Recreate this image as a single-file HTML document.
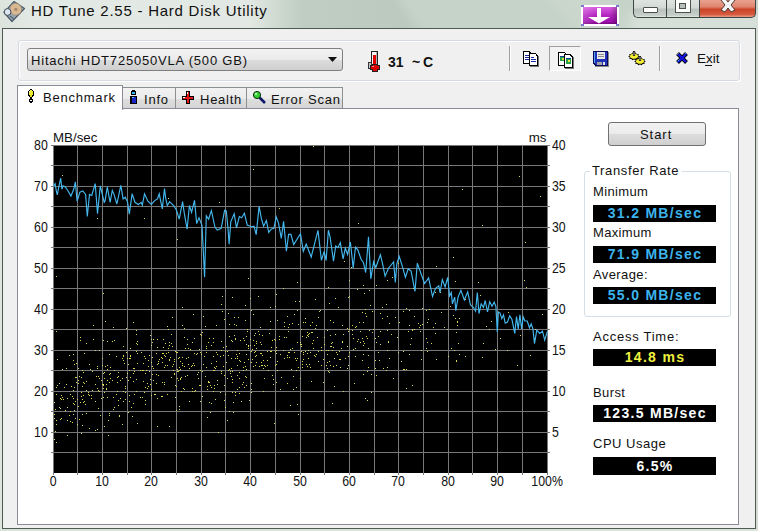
<!DOCTYPE html>
<html><head><meta charset="utf-8">
<style>
*{margin:0;padding:0;box-sizing:border-box}
html,body{width:758px;height:531px;overflow:hidden}
body{position:relative;font-family:"Liberation Sans",sans-serif;background:#c6d2c8;color:#000}
.a{position:absolute}
.t{position:absolute;white-space:nowrap;line-height:1}
#glass{left:0;top:0;width:758px;height:531px}
#client{left:2px;top:28px;width:754px;height:501px;background:#f0f0f0;border:1px solid #4f5a55}
.cap{top:0;height:18px;border:1px solid #3c4642;border-top:none}
.tabi{background:linear-gradient(#f2f2f2,#ebebeb 50%,#dedede 51%,#d4d4d4);border:1px solid #8e8f8f;border-bottom:none}
.lcd{position:absolute;background:#000;left:593px;width:123px;height:17px;font-weight:bold;font-size:14px;line-height:17px;text-align:center;letter-spacing:1.3px;text-indent:1px}
.ui{font-size:13px;color:#111}
</style></head><body>
<svg class="a" id="glass" width="758" height="531" viewBox="0 0 758 531">
 <defs>
  <linearGradient id="gl" x1="0" x2="1" y1="0" y2="0">
   <stop offset="0" stop-color="#dde4de"/>
   <stop offset="0.05" stop-color="#e3e9e4"/>
   <stop offset="0.33" stop-color="#e2e8e3"/>
   <stop offset="0.365" stop-color="#cfdad1"/>
   <stop offset="0.40" stop-color="#bfcdc2"/>
   <stop offset="0.52" stop-color="#bccabf"/>
   <stop offset="1" stop-color="#bfccc2"/>
  </linearGradient>
  <filter id="bl" x="-0.1" y="-0.1" width="1.2" height="1.2"><feGaussianBlur stdDeviation="4"/></filter>
 </defs>
 <rect width="758" height="531" fill="#d2dcd4"/>
 <rect width="758" height="30" fill="url(#gl)"/>
 <g filter="url(#bl)">
  <polygon points="392,-10 760,-10 760,40 426,40" fill="#c6d3c9"/>
  <polygon points="540,-10 600,-10 640,40 590,40" fill="#cdd9cf" opacity="0.7"/>
  <rect x="630" y="12" width="140" height="30" fill="#d6dfd8"/>
 </g>
 <rect x="0" y="28" width="2" height="503" fill="#dfe6e0"/>
 <rect x="756" y="28" width="2" height="503" fill="#d3ddd5"/>
 <rect x="0" y="529" width="758" height="2" fill="#dae2dc"/>
</svg>
<!-- app icon -->
<svg class="a" style="left:0;top:0" width="28" height="24" viewBox="0 0 28 24">
 <path d="M14 1.5 L24.5 8.5 L12 21.5 L4 12.5 Z" fill="#9aa8b4" stroke="#4c5a68" stroke-width="1.2" stroke-linejoin="round"/>
 <circle cx="15.6" cy="9.2" r="6" fill="#d9b894" stroke="#8a7a6a" stroke-width="0.6"/>
 <circle cx="15.8" cy="9.4" r="1.6" fill="#a88868"/>
 <circle cx="7.6" cy="12" r="3.4" fill="#dde6ee" stroke="#3e4a56" stroke-width="1"/>
 <path d="M10 16 L14 19" stroke="#5a6a7a" stroke-width="1.5"/>
</svg>
<div class="t" style="left:31px;top:3px;font-size:15px;color:#101010;letter-spacing:0.75px">HD Tune 2.55 - Hard Disk Utility</div>
<!-- purple button -->
<div class="a" style="left:581px;top:5px;width:38px;height:21px;background:#fff"></div>
<div class="a" style="left:581px;top:5px;width:3px;height:2px;background:#7c78d0"></div>
<div class="a" style="left:616px;top:5px;width:3px;height:2px;background:#7c78d0"></div>
<div class="a" style="left:581px;top:24px;width:3px;height:2px;background:#7c78d0"></div>
<div class="a" style="left:616px;top:24px;width:3px;height:2px;background:#7c78d0"></div>
<div class="a" style="left:583px;top:7px;width:34px;height:17px;background:linear-gradient(90deg,rgba(255,255,255,.18),rgba(255,255,255,0) 40%,rgba(0,0,0,0) 80%,rgba(0,0,0,.25)),linear-gradient(#d860e0,#b424c0 50%,#a010b0 85%,#7a0880);"></div>
<svg class="a" style="left:583px;top:7px" width="34" height="17" viewBox="0 0 34 17"><path d="M14 1 H18 V10 L27 10 L16 16.5 L5 10 L14 10 Z" fill="#fff"/></svg>
<!-- caption buttons -->
<div class="a cap" style="left:633px;width:34px;border-right:none;border-bottom-left-radius:5px;background:linear-gradient(#dfe4e1,#d3d9d5 45%,#b9c2bd 55%,#c7cfca 90%,#e4e9e6)"></div>
<div class="a cap" style="left:666px;width:33px;border-right:none;background:linear-gradient(#dfe4e1,#d3d9d5 45%,#b9c2bd 55%,#c7cfca 90%,#e4e9e6)"></div>
<div class="a cap" style="left:699px;width:57px;border-bottom-right-radius:5px;background:linear-gradient(#eaa190,#e08570 40%,#cc4426 55%,#d65a3e 85%,#eb9b88)"></div>
<div class="a" style="left:643px;top:7px;width:15px;height:6px;background:#fff;border:1px solid #4a524e;border-radius:1px"></div>
<div class="a" style="left:675px;top:-1px;width:16px;height:14px;background:#fff;border:1px solid #4a524e"></div>
<div class="a" style="left:679px;top:3px;width:7px;height:6px;background:#b8beba;border:1px solid #4a524e"></div>
<svg class="a" style="left:718px;top:-3px" width="20" height="17" viewBox="0 0 20 17"><path d="M3 3 L7 1 L10 5 L13 1 L17 3 L13 8 L17 13 L13 15 L10 11 L7 15 L3 13 L7 8 Z" fill="#f4f4f4" stroke="#4a3a36" stroke-width="1"/></svg>

<div class="a" id="client"></div>
<!-- toolbar panel -->
<div class="a" style="left:18px;top:40px;width:722px;height:41px;border:1px solid #d6dae2;border-radius:3px;box-shadow:inset 1px 1px 0 #fff,1px 1px 0 #fff"></div>
<!-- combo -->
<div class="a" style="left:27px;top:48px;width:316px;height:23px;border:1px solid #7f7f7f;border-radius:3px;background:linear-gradient(#f3f3f3,#ebebeb 50%,#dddddd 51%,#cfcfcf)"></div>
<div class="t ui" style="left:31px;top:54px;letter-spacing:0.8px">Hitachi HDT725050VLA (500 GB)</div>
<svg class="a" style="left:328px;top:57px" width="9" height="6" viewBox="0 0 9 6"><path d="M0 0 H9 L4.5 5 Z" fill="#111"/></svg>
<!-- thermometer -->
<svg class="a" style="left:366px;top:49px" width="16" height="24" viewBox="0 0 16 24" shape-rendering="crispEdges">
 <rect x="5" y="2" width="7" height="15" fill="#222"/>
 <rect x="6" y="3" width="5" height="13" fill="#f4f4f4"/>
 <rect x="10" y="3" width="1" height="13" fill="#b0b0b0"/>
 <rect x="7" y="6" width="3" height="11" fill="#e00000"/>
 <rect x="2" y="13" width="4" height="7" fill="#333"/>
 <rect x="3" y="14" width="2" height="5" fill="#c8c8c8"/>
 <rect x="4" y="16" width="10" height="5" fill="#222"/>
 <rect x="6" y="15" width="6" height="8" fill="#222"/>
 <rect x="5" y="17" width="8" height="3" fill="#e00000"/>
 <rect x="7" y="16" width="4" height="6" fill="#e00000"/>
 <rect x="6" y="17" width="2" height="1" fill="#ff9090"/>
</svg>
<div class="t" style="left:388px;top:55px;font-size:14px;font-weight:bold;color:#111">31</div>
<div class="t" style="left:412px;top:55px;font-size:14px;font-weight:bold;color:#111">~</div><div class="t" style="left:423px;top:55px;font-size:14px;font-weight:bold;color:#111">C</div>
<!-- separators -->
<div class="a" style="left:509px;top:46px;width:2px;height:25px;border-left:1px solid #a0a0a0;border-right:1px solid #fff"></div>
<div class="a" style="left:659px;top:46px;width:2px;height:25px;border-left:1px solid #a0a0a0;border-right:1px solid #fff"></div>
<!-- pressed button -->
<div class="a" style="left:549px;top:46px;width:32px;height:25px;border:1px solid;border-color:#a0a0a0 #fff #fff #a0a0a0;background:#f3f3f3"></div>
<!-- icons -->
<svg class="a" style="left:520px;top:48px" width="22" height="20" viewBox="0 0 22 20" shape-rendering="crispEdges">
 <path d="M3 3h7v1h1v9h-8z" fill="#000"/>
 <rect x="4" y="4" width="5" height="11" fill="#fff"/>
 <rect x="5" y="7" width="4" height="1" fill="#1c2aa8"/><rect x="5" y="9" width="4" height="1" fill="#1c2aa8"/><rect x="5" y="11" width="4" height="1" fill="#1c2aa8"/>
 <rect x="3" y="3" width="7" height="1" fill="#000"/><rect x="3" y="3" width="1" height="13" fill="#000"/><rect x="3" y="15" width="7" height="1" fill="#000"/>
 <path d="M9 5h6l3 3v10h-9z" fill="#000"/>
 <path d="M10 6h5v1h1v1h1v9h-7z" fill="#fff"/>
 <rect x="15" y="6" width="1" height="2" fill="#fff"/>
 <rect x="11" y="9" width="3" height="1" fill="#1c2aa8"/><rect x="11" y="11" width="5" height="1" fill="#1c2aa8"/><rect x="11" y="13" width="5" height="1" fill="#1c2aa8"/>
 <rect x="18" y="8" width="1" height="11" fill="#777"/><rect x="10" y="18" width="9" height="1" fill="#777"/>
</svg>
<svg class="a" style="left:556px;top:50px" width="22" height="20" viewBox="0 0 22 20" shape-rendering="crispEdges">
 <path d="M2 2h7v1h1v13h-8z" fill="#000"/>
 <rect x="3" y="3" width="6" height="12" fill="#fff"/>
 <rect x="4" y="6" width="4" height="1" fill="#1a3a9a"/>
 <rect x="4" y="7" width="4" height="4" fill="#28a048"/>
 <rect x="6" y="8" width="2" height="2" fill="#d8e040"/>
 <path d="M8 4h6l3 3v11h-9z" fill="#000"/>
 <path d="M9 5h5v1h1v1h1v10h-7z" fill="#fff"/>
 <rect x="10" y="8" width="5" height="1" fill="#1a3a9a"/>
 <rect x="10" y="9" width="5" height="5" fill="#28a048"/>
 <rect x="12" y="10" width="2" height="2" fill="#e0e840"/>
 <rect x="17" y="7" width="1" height="12" fill="#777"/><rect x="9" y="18" width="9" height="1" fill="#777"/>
</svg>
<svg class="a" style="left:592px;top:50px" width="18" height="18" viewBox="0 0 18 18" shape-rendering="crispEdges">
 <path d="M1 1h15v15h-13l-2-2z" fill="#0a0a58"/>
 <path d="M2 2h13v13h-11l-2-2z" fill="#2232b8"/>
 <rect x="2" y="2" width="1" height="11" fill="#50a8f0"/>
 <rect x="5" y="2" width="8" height="7" fill="#e8e8e8"/>
 <rect x="6" y="4" width="6" height="1" fill="#8c8c8c"/><rect x="6" y="6" width="6" height="1" fill="#8c8c8c"/>
 <rect x="5" y="12" width="5" height="3" fill="#a4a4a4"/><rect x="11" y="12" width="2" height="3" fill="#e0e0e0"/>
 <rect x="16" y="2" width="1" height="15" fill="#888"/><rect x="3" y="16" width="14" height="1" fill="#888"/>
</svg>
<svg class="a" style="left:627px;top:49px" width="20" height="18" viewBox="0 0 20 18">
 <polygon points="18.90,12.40 17.21,13.35 17.77,14.81 15.60,14.89 14.82,16.30 13.00,15.47 11.18,16.30 10.40,14.89 8.23,14.81 8.79,13.35 7.10,12.40 8.79,11.45 8.23,9.99 10.40,9.91 11.18,8.50 13.00,9.33 14.82,8.50 15.60,9.91 17.77,9.99 17.21,11.45" fill="#000"/>
 <polygon points="17.40,12.20 16.68,12.96 16.56,13.85 15.28,14.19 14.36,14.86 13.00,14.66 11.64,14.86 10.72,14.19 9.44,13.85 9.32,12.96 8.60,12.20 9.32,11.44 9.44,10.55 10.72,10.21 11.64,9.54 13.00,9.74 14.36,9.54 15.28,10.21 16.56,10.55 16.68,11.44" fill="#f4f030"/>
 <polygon points="12.90,7.40 11.21,8.35 11.77,9.81 9.60,9.89 8.82,11.30 7.00,10.47 5.18,11.30 4.40,9.89 2.23,9.81 2.79,8.35 1.10,7.40 2.79,6.45 2.23,4.99 4.40,4.91 5.18,3.50 7.00,4.33 8.82,3.50 9.60,4.91 11.77,4.99 11.21,6.45" fill="#000"/>
 <polygon points="11.40,7.20 10.68,7.96 10.56,8.85 9.28,9.19 8.36,9.86 7.00,9.66 5.64,9.86 4.72,9.19 3.44,8.85 3.32,7.96 2.60,7.20 3.32,6.44 3.44,5.55 4.72,5.21 5.64,4.54 7.00,4.74 8.36,4.54 9.28,5.21 10.56,5.55 10.68,6.44" fill="#f4f030"/>
 <path d="M7 2v5M13 7v5" stroke="#000" stroke-width="2.2"/>
 <path d="M7 2.6v4M13 7.6v4" stroke="#d8d8d8" stroke-width="0.9"/>
</svg>
<svg class="a" style="left:674px;top:50px" width="16" height="16" viewBox="0 0 16 16">
 <path d="M3.5 3.5 L12.5 12.5 M12.5 3.5 L3.5 12.5" stroke="#000" stroke-width="4"/>
 <path d="M4 4 L12 12 M12 4 L4 12" stroke="#1414e0" stroke-width="2.4"/>
 <path d="M3.2 4.6 L4.6 3.2 M3.4 11.4 L5.4 9.4 M10.6 3.8 L11.8 3.2" stroke="#70d0ff" stroke-width="0.8"/>
</svg>
<div class="t ui" style="left:697px;top:52px;font-size:13.5px">Exit</div>
<div class="a" style="left:705px;top:65px;width:7px;height:1px;background:#111"></div>

<!-- tabs -->
<div class="a tabi" style="left:122px;top:87px;width:54px;height:22px"></div>
<div class="a tabi" style="left:175px;top:87px;width:72px;height:22px"></div>
<div class="a tabi" style="left:246px;top:87px;width:97px;height:22px"></div>
<!-- tab panel -->
<div class="a" style="left:17px;top:108px;width:722px;height:417px;background:#fff;border:1px solid #898c95"></div>
<div class="a" style="left:17px;top:85px;width:106px;height:25px;background:#fff;border:1px solid #898c95;border-bottom:none"></div>
<!-- tab icons/text -->
<svg class="a" style="left:24px;top:86px" width="16" height="18" viewBox="0 0 16 18" shape-rendering="crispEdges">
 <rect x="6" y="3" width="2" height="1" fill="#000"/>
 <rect x="5" y="4" width="4" height="1" fill="#000"/>
 <rect x="4" y="5" width="6" height="5" fill="#000"/>
 <rect x="5" y="10" width="4" height="1" fill="#000"/>
 <rect x="6" y="11" width="2" height="2" fill="#000"/>
 <rect x="5" y="13" width="4" height="3" fill="#000"/>
 <rect x="6" y="16" width="2" height="1" fill="#000"/>
 <rect x="6" y="4" width="2" height="1" fill="#f0f040"/>
 <rect x="5" y="5" width="4" height="4" fill="#eaea30"/>
 <rect x="6" y="9" width="2" height="2" fill="#d8d820"/>
 <rect x="5" y="5" width="1" height="2" fill="#fafab0"/>
 <rect x="6" y="14" width="2" height="1" fill="#fff"/>
</svg>
<div class="t ui" style="left:43px;top:91px;letter-spacing:0.78px">Benchmark</div>
<svg class="a" style="left:126px;top:88px" width="16" height="18" viewBox="0 0 16 18" shape-rendering="crispEdges">
 <rect x="5" y="3" width="5" height="4" fill="#000"/>
 <rect x="6" y="2" width="3" height="1" fill="#000"/>
 <rect x="6" y="4" width="3" height="2" fill="#30b8f0"/>
 <rect x="4" y="8" width="7" height="8" fill="#000"/>
 <rect x="6" y="9" width="4" height="6" fill="#1a22c8"/>
 <rect x="6" y="9" width="2" height="1" fill="#50c0ff"/>
</svg>
<div class="t ui" style="left:144px;top:93px;letter-spacing:0.8px">Info</div>
<svg class="a" style="left:176px;top:86px" width="24" height="22" viewBox="0 0 24 22" shape-rendering="crispEdges">
 <rect x="10" y="5" width="4" height="13" fill="#000"/>
 <rect x="6" y="10" width="12" height="4" fill="#000"/>
 <rect x="11" y="6" width="2" height="11" fill="#e01818"/>
 <rect x="7" y="11" width="10" height="2" fill="#e01818"/>
 <rect x="11" y="6" width="1" height="2" fill="#fff"/>
 <rect x="7" y="11" width="2" height="1" fill="#fff"/>
</svg>
<div class="t ui" style="left:200px;top:93px;letter-spacing:0.75px">Health</div>
<svg class="a" style="left:252px;top:90px" width="15" height="15" viewBox="0 0 15 15">
 <path d="M7 7 L13 13" stroke="#10186a" stroke-width="2.6"/>
 <circle cx="5" cy="5" r="3.6" fill="#30d030" stroke="#103010"/>
 <circle cx="4" cy="4" r="1.2" fill="#b0ffb0"/>
</svg>
<div class="t ui" style="left:271px;top:93px;letter-spacing:0.75px">Error Scan</div>

<svg class="a" style="left:0;top:0" width="758" height="531" viewBox="0 0 758 531"><rect x="53" y="145" width="495" height="328" fill="#000"/><path d="M53.5 145 V474.5 M77.5 145 V474.5 M102.5 145 V474.5 M127.5 145 V474.5 M151.5 145 V474.5 M176.5 145 V474.5 M201.5 145 V474.5 M225.5 145 V474.5 M250.5 145 V474.5 M275.5 145 V474.5 M300.5 145 V474.5 M324.5 145 V474.5 M349.5 145 V474.5 M374.5 145 V474.5 M398.5 145 V474.5 M423.5 145 V474.5 M448.5 145 V474.5 M472.5 145 V474.5 M497.5 145 V474.5 M522.5 145 V474.5 M547.5 145 V474.5 M50.5 145.5 H549.5 M50.5 165.5 H549.5 M50.5 186.5 H549.5 M50.5 206.5 H549.5 M50.5 227.5 H549.5 M50.5 247.5 H549.5 M50.5 268.5 H549.5 M50.5 288.5 H549.5 M50.5 309.5 H549.5 M50.5 329.5 H549.5 M50.5 350.5 H549.5 M50.5 370.5 H549.5 M50.5 391.5 H549.5 M50.5 411.5 H549.5 M50.5 432.5 H549.5 M50.5 452.5 H549.5" stroke="#787878" stroke-width="1" fill="none" shape-rendering="crispEdges"/><path d="M213 356h1v1h-1zM317 337h1v1h-1zM82 414h1v1h-1zM88 394h1v1h-1zM262 365h1v1h-1zM337 354h1v1h-1zM534 338h1v1h-1zM124 363h1v1h-1zM205 376h1v1h-1zM368 367h1v1h-1zM323 359h1v1h-1zM388 342h1v1h-1zM208 342h1v1h-1zM174 373h1v1h-1zM312 343h1v1h-1zM259 334h1v1h-1zM128 412h1v1h-1zM339 351h1v1h-1zM287 383h1v1h-1zM458 343h1v1h-1zM243 382h1v1h-1zM136 379h1v1h-1zM83 402h1v1h-1zM246 369h1v1h-1zM93 339h1v1h-1zM190 349h1v1h-1zM230 371h1v1h-1zM140 370h1v1h-1zM168 352h1v1h-1zM56 387h1v1h-1zM235 392h1v1h-1zM307 335h1v1h-1zM386 370h1v1h-1zM247 331h1v1h-1zM104 392h1v1h-1zM156 374h1v1h-1zM221 373h1v1h-1zM103 384h1v1h-1zM66 384h1v1h-1zM178 358h1v1h-1zM233 402h1v1h-1zM283 288h1v1h-1zM96 376h1v1h-1zM65 410h1v1h-1zM313 340h1v1h-1zM182 365h1v1h-1zM136 334h1v1h-1zM216 352h1v1h-1zM165 365h1v1h-1zM67 398h1v1h-1zM181 391h1v1h-1zM162 362h1v1h-1zM150 335h1v1h-1zM95 350h1v1h-1zM141 352h1v1h-1zM251 392h1v1h-1zM410 344h1v1h-1zM125 388h1v1h-1zM226 362h1v1h-1zM313 348h1v1h-1zM267 360h1v1h-1zM177 352h1v1h-1zM172 366h1v1h-1zM118 405h1v1h-1zM228 313h1v1h-1zM260 327h1v1h-1zM300 342h1v1h-1zM270 351h1v1h-1zM55 409h1v1h-1zM214 385h1v1h-1zM327 368h1v1h-1zM176 386h1v1h-1zM330 365h1v1h-1zM355 327h1v1h-1zM305 318h1v1h-1zM289 357h1v1h-1zM113 397h1v1h-1zM89 395h1v1h-1zM129 370h1v1h-1zM162 358h1v1h-1zM249 400h1v1h-1zM133 373h1v1h-1zM307 353h1v1h-1zM409 354h1v1h-1zM326 365h1v1h-1zM360 342h1v1h-1zM85 404h1v1h-1zM105 321h1v1h-1zM73 390h1v1h-1zM261 365h1v1h-1zM456 361h1v1h-1zM334 386h1v1h-1zM98 376h1v1h-1zM89 364h1v1h-1zM95 430h1v1h-1zM277 370h1v1h-1zM185 348h1v1h-1zM107 380h1v1h-1zM78 383h1v1h-1zM427 351h1v1h-1zM300 344h1v1h-1zM177 371h1v1h-1zM147 383h1v1h-1zM297 342h1v1h-1zM247 329h1v1h-1zM222 296h1v1h-1zM253 366h1v1h-1zM88 392h1v1h-1zM179 406h1v1h-1zM192 388h1v1h-1zM198 378h1v1h-1zM183 388h1v1h-1zM174 359h1v1h-1zM54 418h1v1h-1zM287 357h1v1h-1zM56 424h1v1h-1zM98 390h1v1h-1zM203 364h1v1h-1zM342 342h1v1h-1zM245 320h1v1h-1zM75 418h1v1h-1zM122 358h1v1h-1zM302 361h1v1h-1zM167 326h1v1h-1zM119 416h1v1h-1zM328 371h1v1h-1zM362 338h1v1h-1zM301 346h1v1h-1zM378 336h1v1h-1zM90 369h1v1h-1zM412 330h1v1h-1zM297 282h1v1h-1zM289 352h1v1h-1zM370 305h1v1h-1zM126 377h1v1h-1zM333 322h1v1h-1zM83 372h1v1h-1zM386 304h1v1h-1zM308 334h1v1h-1zM62 397h1v1h-1zM275 365h1v1h-1zM157 426h1v1h-1zM123 391h1v1h-1zM167 365h1v1h-1zM293 376h1v1h-1zM275 351h1v1h-1zM123 360h1v1h-1zM54 439h1v1h-1zM237 389h1v1h-1zM231 358h1v1h-1zM189 401h1v1h-1zM194 391h1v1h-1zM176 352h1v1h-1zM237 356h1v1h-1zM408 331h1v1h-1zM194 338h1v1h-1zM286 337h1v1h-1zM376 375h1v1h-1zM328 350h1v1h-1zM156 383h1v1h-1zM298 414h1v1h-1zM275 306h1v1h-1zM148 366h1v1h-1zM171 377h1v1h-1zM422 308h1v1h-1zM239 372h1v1h-1zM84 401h1v1h-1zM301 344h1v1h-1zM187 344h1v1h-1zM483 343h1v1h-1zM69 415h1v1h-1zM342 325h1v1h-1zM246 377h1v1h-1zM107 341h1v1h-1zM311 381h1v1h-1zM279 336h1v1h-1zM73 398h1v1h-1zM371 392h1v1h-1zM116 356h1v1h-1zM109 354h1v1h-1zM312 332h1v1h-1zM349 352h1v1h-1zM202 396h1v1h-1zM169 359h1v1h-1zM205 326h1v1h-1zM260 353h1v1h-1zM165 356h1v1h-1zM389 358h1v1h-1zM302 367h1v1h-1zM457 325h1v1h-1zM162 353h1v1h-1zM297 404h1v1h-1zM163 339h1v1h-1zM126 328h1v1h-1zM158 375h1v1h-1zM83 395h1v1h-1zM145 373h1v1h-1zM380 331h1v1h-1zM237 358h1v1h-1zM191 366h1v1h-1zM229 369h1v1h-1zM78 368h1v1h-1zM237 365h1v1h-1zM495 349h1v1h-1zM256 355h1v1h-1zM71 386h1v1h-1zM220 392h1v1h-1zM182 357h1v1h-1zM209 402h1v1h-1zM518 327h1v1h-1zM169 426h1v1h-1zM244 340h1v1h-1zM265 366h1v1h-1zM352 334h1v1h-1zM211 363h1v1h-1zM151 362h1v1h-1zM175 397h1v1h-1zM214 367h1v1h-1zM184 389h1v1h-1zM403 351h1v1h-1zM169 342h1v1h-1zM380 313h1v1h-1zM332 342h1v1h-1zM175 351h1v1h-1zM129 358h1v1h-1zM248 345h1v1h-1zM303 359h1v1h-1zM287 316h1v1h-1zM73 403h1v1h-1zM181 377h1v1h-1zM347 346h1v1h-1zM123 401h1v1h-1zM179 357h1v1h-1zM59 383h1v1h-1zM387 330h1v1h-1zM85 404h1v1h-1zM248 348h1v1h-1zM134 368h1v1h-1zM255 333h1v1h-1zM207 417h1v1h-1zM229 411h1v1h-1zM232 297h1v1h-1zM412 385h1v1h-1zM262 355h1v1h-1zM253 340h1v1h-1zM61 399h1v1h-1zM97 366h1v1h-1zM125 399h1v1h-1zM310 367h1v1h-1zM151 389h1v1h-1zM291 369h1v1h-1zM459 318h1v1h-1zM440 292h1v1h-1zM161 396h1v1h-1zM308 358h1v1h-1zM74 404h1v1h-1zM426 338h1v1h-1zM348 331h1v1h-1zM362 312h1v1h-1zM263 368h1v1h-1zM273 384h1v1h-1zM294 352h1v1h-1zM279 339h1v1h-1zM117 382h1v1h-1zM99 378h1v1h-1zM367 338h1v1h-1zM305 322h1v1h-1zM149 371h1v1h-1zM296 360h1v1h-1zM86 381h1v1h-1zM426 348h1v1h-1zM455 318h1v1h-1zM301 351h1v1h-1zM302 364h1v1h-1zM72 422h1v1h-1zM137 423h1v1h-1zM110 367h1v1h-1zM105 366h1v1h-1zM363 345h1v1h-1zM231 340h1v1h-1zM271 351h1v1h-1zM457 322h1v1h-1zM342 341h1v1h-1zM70 394h1v1h-1zM357 289h1v1h-1zM118 376h1v1h-1zM375 360h1v1h-1zM106 384h1v1h-1zM164 355h1v1h-1zM360 331h1v1h-1zM120 380h1v1h-1zM101 398h1v1h-1zM251 389h1v1h-1zM330 346h1v1h-1zM371 374h1v1h-1zM176 352h1v1h-1zM75 377h1v1h-1zM82 399h1v1h-1zM60 408h1v1h-1zM152 366h1v1h-1zM303 352h1v1h-1zM206 348h1v1h-1zM77 399h1v1h-1zM57 359h1v1h-1zM420 331h1v1h-1zM165 343h1v1h-1zM168 348h1v1h-1zM404 369h1v1h-1zM326 350h1v1h-1zM184 337h1v1h-1zM486 326h1v1h-1zM421 350h1v1h-1zM171 343h1v1h-1zM284 322h1v1h-1zM269 333h1v1h-1zM158 361h1v1h-1zM92 390h1v1h-1zM106 388h1v1h-1zM223 366h1v1h-1zM86 390h1v1h-1zM232 379h1v1h-1zM86 343h1v1h-1zM106 388h1v1h-1zM364 343h1v1h-1zM103 385h1v1h-1zM211 345h1v1h-1zM64 387h1v1h-1zM235 395h1v1h-1zM69 355h1v1h-1zM224 375h1v1h-1zM318 351h1v1h-1zM457 321h1v1h-1zM54 402h1v1h-1zM56 331h1v1h-1zM295 358h1v1h-1zM224 385h1v1h-1zM182 363h1v1h-1zM398 352h1v1h-1zM108 420h1v1h-1zM362 360h1v1h-1zM251 362h1v1h-1zM491 321h1v1h-1zM155 394h1v1h-1zM240 340h1v1h-1zM168 329h1v1h-1zM225 351h1v1h-1zM130 356h1v1h-1zM137 341h1v1h-1zM116 394h1v1h-1zM148 360h1v1h-1zM130 377h1v1h-1zM310 367h1v1h-1zM215 399h1v1h-1zM104 378h1v1h-1zM104 426h1v1h-1zM414 329h1v1h-1zM150 384h1v1h-1zM245 366h1v1h-1zM250 345h1v1h-1zM365 313h1v1h-1zM123 346h1v1h-1zM336 365h1v1h-1zM261 344h1v1h-1zM369 290h1v1h-1zM208 382h1v1h-1zM363 354h1v1h-1zM262 335h1v1h-1zM144 356h1v1h-1zM436 266h1v1h-1zM72 396h1v1h-1zM133 403h1v1h-1zM103 373h1v1h-1zM320 310h1v1h-1zM255 351h1v1h-1zM157 339h1v1h-1zM114 407h1v1h-1zM228 355h1v1h-1zM60 419h1v1h-1zM260 342h1v1h-1zM164 384h1v1h-1zM161 357h1v1h-1zM117 391h1v1h-1zM284 358h1v1h-1zM227 420h1v1h-1zM284 337h1v1h-1zM239 353h1v1h-1zM263 391h1v1h-1zM192 365h1v1h-1zM202 332h1v1h-1zM378 352h1v1h-1zM82 425h1v1h-1zM123 355h1v1h-1zM365 398h1v1h-1zM376 342h1v1h-1zM103 388h1v1h-1zM224 400h1v1h-1zM136 343h1v1h-1zM151 345h1v1h-1zM315 299h1v1h-1zM327 362h1v1h-1zM169 360h1v1h-1zM283 350h1v1h-1zM295 301h1v1h-1zM57 385h1v1h-1zM284 326h1v1h-1zM238 317h1v1h-1zM367 371h1v1h-1zM216 366h1v1h-1zM305 351h1v1h-1zM220 356h1v1h-1zM234 317h1v1h-1zM157 364h1v1h-1zM261 362h1v1h-1zM301 329h1v1h-1zM303 322h1v1h-1zM216 325h1v1h-1zM201 335h1v1h-1zM73 360h1v1h-1zM78 406h1v1h-1zM357 341h1v1h-1zM389 323h1v1h-1zM429 309h1v1h-1zM143 381h1v1h-1zM376 285h1v1h-1zM330 335h1v1h-1zM210 385h1v1h-1zM80 402h1v1h-1zM60 398h1v1h-1zM256 343h1v1h-1zM128 364h1v1h-1zM56 442h1v1h-1zM97 429h1v1h-1zM117 377h1v1h-1zM414 316h1v1h-1zM78 380h1v1h-1zM413 288h1v1h-1zM363 285h1v1h-1zM178 380h1v1h-1zM406 369h1v1h-1zM456 332h1v1h-1zM207 386h1v1h-1zM293 389h1v1h-1zM234 324h1v1h-1zM125 392h1v1h-1zM232 341h1v1h-1zM243 338h1v1h-1zM332 403h1v1h-1zM217 384h1v1h-1zM349 296h1v1h-1zM239 378h1v1h-1zM451 348h1v1h-1zM261 353h1v1h-1zM74 410h1v1h-1zM335 298h1v1h-1zM224 319h1v1h-1zM152 357h1v1h-1zM352 325h1v1h-1zM179 370h1v1h-1zM97 388h1v1h-1zM288 331h1v1h-1zM147 388h1v1h-1zM232 392h1v1h-1zM252 359h1v1h-1zM106 389h1v1h-1zM441 312h1v1h-1zM309 333h1v1h-1zM70 411h1v1h-1zM333 322h1v1h-1zM178 371h1v1h-1zM95 401h1v1h-1zM328 287h1v1h-1zM348 356h1v1h-1zM112 380h1v1h-1zM383 368h1v1h-1zM274 423h1v1h-1zM163 353h1v1h-1zM179 409h1v1h-1zM465 299h1v1h-1zM81 392h1v1h-1zM387 280h1v1h-1zM345 358h1v1h-1zM180 379h1v1h-1zM290 349h1v1h-1zM387 350h1v1h-1zM406 388h1v1h-1zM162 382h1v1h-1zM122 424h1v1h-1zM276 382h1v1h-1zM363 341h1v1h-1zM125 386h1v1h-1zM185 376h1v1h-1zM136 391h1v1h-1zM210 412h1v1h-1zM81 433h1v1h-1zM382 318h1v1h-1zM180 369h1v1h-1zM233 412h1v1h-1zM102 384h1v1h-1zM411 338h1v1h-1zM122 378h1v1h-1zM145 387h1v1h-1zM335 334h1v1h-1zM142 370h1v1h-1zM92 371h1v1h-1zM353 338h1v1h-1zM355 356h1v1h-1zM153 368h1v1h-1zM409 310h1v1h-1zM296 370h1v1h-1zM145 358h1v1h-1zM234 335h1v1h-1zM56 420h1v1h-1zM273 379h1v1h-1zM211 387h1v1h-1zM241 401h1v1h-1zM306 364h1v1h-1zM318 361h1v1h-1zM143 370h1v1h-1zM177 378h1v1h-1zM397 337h1v1h-1zM62 369h1v1h-1zM399 322h1v1h-1zM76 363h1v1h-1zM191 366h1v1h-1zM253 314h1v1h-1zM126 352h1v1h-1zM421 359h1v1h-1zM245 305h1v1h-1zM248 359h1v1h-1zM172 346h1v1h-1zM268 370h1v1h-1zM80 340h1v1h-1zM176 352h1v1h-1zM315 328h1v1h-1zM267 365h1v1h-1zM489 329h1v1h-1zM369 330h1v1h-1zM359 322h1v1h-1zM309 364h1v1h-1zM204 356h1v1h-1zM113 409h1v1h-1zM186 358h1v1h-1zM316 354h1v1h-1zM198 372h1v1h-1zM195 390h1v1h-1zM334 358h1v1h-1zM152 342h1v1h-1zM355 348h1v1h-1zM206 367h1v1h-1zM242 384h1v1h-1zM59 407h1v1h-1zM327 330h1v1h-1zM194 353h1v1h-1zM132 416h1v1h-1zM84 353h1v1h-1zM107 397h1v1h-1zM130 355h1v1h-1zM482 357h1v1h-1zM298 324h1v1h-1zM352 330h1v1h-1zM276 347h1v1h-1zM246 336h1v1h-1zM243 367h1v1h-1zM299 301h1v1h-1zM144 392h1v1h-1zM340 367h1v1h-1zM263 360h1v1h-1zM331 343h1v1h-1zM308 336h1v1h-1zM229 336h1v1h-1zM226 346h1v1h-1zM102 358h1v1h-1zM251 310h1v1h-1zM270 329h1v1h-1zM314 355h1v1h-1zM306 364h1v1h-1zM130 348h1v1h-1zM146 370h1v1h-1zM364 293h1v1h-1zM367 400h1v1h-1zM256 341h1v1h-1zM55 431h1v1h-1zM382 307h1v1h-1zM184 366h1v1h-1zM336 352h1v1h-1zM427 342h1v1h-1zM103 340h1v1h-1zM84 383h1v1h-1zM433 327h1v1h-1zM137 353h1v1h-1zM102 365h1v1h-1zM275 340h1v1h-1zM80 337h1v1h-1zM270 321h1v1h-1zM176 410h1v1h-1zM208 342h1v1h-1zM455 281h1v1h-1zM297 310h1v1h-1zM173 364h1v1h-1zM206 346h1v1h-1zM292 348h1v1h-1zM230 373h1v1h-1zM330 320h1v1h-1zM252 349h1v1h-1zM114 370h1v1h-1zM148 386h1v1h-1zM170 357h1v1h-1zM130 358h1v1h-1zM99 391h1v1h-1zM272 340h1v1h-1zM450 306h1v1h-1zM239 387h1v1h-1zM156 353h1v1h-1zM276 350h1v1h-1zM401 361h1v1h-1zM235 338h1v1h-1zM353 349h1v1h-1zM306 337h1v1h-1zM187 339h1v1h-1zM333 366h1v1h-1zM245 376h1v1h-1zM211 403h1v1h-1zM107 365h1v1h-1zM200 385h1v1h-1zM207 389h1v1h-1zM192 391h1v1h-1zM119 415h1v1h-1zM380 344h1v1h-1zM256 348h1v1h-1zM363 322h1v1h-1zM110 378h1v1h-1zM73 354h1v1h-1zM133 368h1v1h-1zM73 414h1v1h-1zM368 355h1v1h-1zM406 308h1v1h-1zM267 351h1v1h-1zM194 365h1v1h-1zM77 424h1v1h-1zM157 398h1v1h-1zM422 324h1v1h-1zM192 342h1v1h-1zM363 374h1v1h-1zM264 365h1v1h-1zM428 319h1v1h-1zM182 325h1v1h-1zM321 365h1v1h-1zM256 362h1v1h-1zM206 352h1v1h-1zM171 334h1v1h-1zM307 366h1v1h-1zM201 354h1v1h-1zM123 356h1v1h-1zM323 382h1v1h-1zM137 353h1v1h-1zM110 367h1v1h-1zM231 376h1v1h-1zM150 379h1v1h-1zM274 339h1v1h-1zM232 382h1v1h-1zM89 428h1v1h-1zM95 384h1v1h-1zM107 369h1v1h-1zM321 350h1v1h-1zM375 338h1v1h-1zM67 407h1v1h-1zM145 404h1v1h-1zM136 330h1v1h-1zM214 370h1v1h-1zM235 339h1v1h-1zM235 358h1v1h-1zM332 350h1v1h-1zM297 358h1v1h-1zM339 359h1v1h-1zM392 277h1v1h-1zM98 408h1v1h-1zM270 351h1v1h-1zM193 363h1v1h-1zM307 332h1v1h-1zM199 385h1v1h-1zM331 346h1v1h-1zM213 370h1v1h-1zM453 315h1v1h-1zM200 334h1v1h-1zM372 311h1v1h-1zM67 435h1v1h-1zM387 367h1v1h-1zM237 375h1v1h-1zM258 331h1v1h-1zM110 373h1v1h-1zM109 382h1v1h-1zM315 356h1v1h-1zM294 352h1v1h-1zM109 413h1v1h-1zM343 334h1v1h-1zM270 357h1v1h-1zM324 344h1v1h-1zM104 372h1v1h-1zM246 385h1v1h-1zM435 323h1v1h-1zM435 333h1v1h-1zM61 418h1v1h-1zM158 363h1v1h-1zM136 351h1v1h-1zM221 341h1v1h-1zM114 340h1v1h-1zM409 325h1v1h-1zM324 337h1v1h-1zM109 374h1v1h-1zM149 355h1v1h-1zM109 415h1v1h-1zM145 400h1v1h-1zM196 354h1v1h-1zM520 335h1v1h-1zM222 311h1v1h-1zM447 329h1v1h-1zM143 363h1v1h-1zM288 327h1v1h-1zM91 398h1v1h-1zM343 391h1v1h-1zM137 344h1v1h-1zM244 362h1v1h-1zM56 394h1v1h-1zM280 354h1v1h-1zM76 382h1v1h-1zM188 348h1v1h-1zM182 307h1v1h-1zM542 314h1v1h-1zM329 372h1v1h-1zM365 309h1v1h-1zM232 371h1v1h-1zM203 316h1v1h-1zM366 316h1v1h-1zM83 382h1v1h-1zM213 338h1v1h-1zM173 370h1v1h-1zM225 407h1v1h-1zM276 353h1v1h-1zM333 347h1v1h-1zM202 371h1v1h-1zM93 325h1v1h-1zM229 324h1v1h-1zM264 378h1v1h-1zM180 378h1v1h-1zM134 371h1v1h-1zM250 339h1v1h-1zM372 332h1v1h-1zM349 280h1v1h-1zM221 371h1v1h-1zM214 388h1v1h-1zM373 329h1v1h-1zM82 370h1v1h-1zM76 377h1v1h-1zM348 365h1v1h-1zM281 377h1v1h-1zM356 326h1v1h-1zM215 368h1v1h-1zM431 343h1v1h-1zM319 311h1v1h-1zM349 329h1v1h-1zM418 323h1v1h-1zM435 292h1v1h-1zM276 294h1v1h-1zM118 372h1v1h-1zM288 352h1v1h-1zM426 310h1v1h-1zM67 420h1v1h-1zM327 354h1v1h-1zM127 373h1v1h-1zM133 322h1v1h-1zM436 359h1v1h-1zM366 336h1v1h-1zM213 391h1v1h-1zM86 413h1v1h-1zM251 383h1v1h-1zM255 365h1v1h-1zM164 367h1v1h-1zM167 394h1v1h-1zM200 370h1v1h-1zM131 407h1v1h-1zM193 314h1v1h-1zM133 381h1v1h-1zM348 297h1v1h-1zM157 347h1v1h-1zM231 368h1v1h-1zM200 352h1v1h-1zM108 435h1v1h-1zM128 380h1v1h-1zM101 380h1v1h-1zM221 350h1v1h-1zM535 329h1v1h-1zM393 378h1v1h-1zM302 336h1v1h-1zM63 399h1v1h-1zM209 382h1v1h-1zM120 398h1v1h-1zM142 397h1v1h-1zM300 378h1v1h-1zM227 378h1v1h-1zM159 359h1v1h-1zM188 364h1v1h-1zM75 401h1v1h-1zM254 352h1v1h-1zM321 347h1v1h-1zM250 298h1v1h-1zM244 387h1v1h-1zM255 356h1v1h-1zM179 367h1v1h-1zM239 360h1v1h-1zM500 338h1v1h-1zM395 317h1v1h-1zM209 338h1v1h-1zM54 414h1v1h-1zM169 345h1v1h-1zM419 327h1v1h-1zM312 322h1v1h-1zM387 316h1v1h-1zM163 347h1v1h-1zM184 328h1v1h-1zM310 352h1v1h-1zM162 396h1v1h-1zM311 332h1v1h-1zM454 350h1v1h-1zM280 389h1v1h-1zM480 295h1v1h-1zM456 360h1v1h-1zM129 395h1v1h-1zM276 364h1v1h-1zM248 346h1v1h-1zM289 324h1v1h-1zM427 322h1v1h-1zM310 325h1v1h-1zM236 354h1v1h-1zM152 374h1v1h-1zM82 386h1v1h-1zM213 342h1v1h-1zM153 380h1v1h-1zM236 325h1v1h-1zM271 347h1v1h-1zM254 335h1v1h-1zM243 370h1v1h-1zM237 350h1v1h-1zM216 361h1v1h-1zM312 322h1v1h-1zM66 368h1v1h-1zM287 355h1v1h-1zM270 307h1v1h-1zM251 351h1v1h-1zM388 341h1v1h-1zM112 341h1v1h-1zM91 395h1v1h-1zM81 396h1v1h-1zM403 369h1v1h-1zM259 366h1v1h-1zM218 432h1v1h-1zM189 368h1v1h-1zM208 381h1v1h-1zM305 322h1v1h-1zM79 419h1v1h-1zM153 339h1v1h-1zM318 317h1v1h-1zM341 348h1v1h-1zM448 356h1v1h-1zM79 376h1v1h-1zM316 325h1v1h-1zM188 357h1v1h-1zM197 374h1v1h-1zM277 320h1v1h-1zM272 375h1v1h-1zM368 348h1v1h-1zM347 368h1v1h-1zM199 349h1v1h-1zM103 397h1v1h-1zM258 296h1v1h-1zM180 361h1v1h-1zM81 377h1v1h-1zM74 387h1v1h-1zM340 359h1v1h-1zM329 361h1v1h-1zM246 344h1v1h-1zM240 361h1v1h-1zM100 415h1v1h-1zM412 329h1v1h-1zM197 353h1v1h-1zM292 323h1v1h-1zM97 368h1v1h-1zM187 375h1v1h-1zM508 312h1v1h-1zM223 355h1v1h-1zM217 354h1v1h-1zM175 385h1v1h-1zM200 401h1v1h-1zM329 303h1v1h-1zM347 328h1v1h-1zM70 421h1v1h-1zM118 400h1v1h-1zM227 351h1v1h-1zM137 363h1v1h-1zM217 380h1v1h-1zM127 358h1v1h-1zM298 367h1v1h-1zM134 394h1v1h-1zM303 354h1v1h-1zM154 394h1v1h-1zM172 317h1v1h-1zM61 395h1v1h-1zM294 314h1v1h-1zM166 353h1v1h-1zM129 401h1v1h-1zM308 350h1v1h-1zM338 307h1v1h-1zM403 311h1v1h-1zM174 374h1v1h-1zM358 339h1v1h-1zM507 350h1v1h-1zM254 345h1v1h-1zM174 361h1v1h-1zM223 347h1v1h-1zM151 339h1v1h-1zM290 405h1v1h-1zM151 395h1v1h-1zM99 350h1v1h-1zM225 394h1v1h-1zM420 325h1v1h-1zM344 261h1v1h-1zM459 354h1v1h-1zM482 225h1v1h-1zM526 287h1v1h-1zM519 176h1v1h-1zM530 355h1v1h-1zM177 369h1v1h-1zM168 198h1v1h-1zM279 208h1v1h-1zM296 387h1v1h-1zM391 334h1v1h-1zM246 354h1v1h-1zM444 327h1v1h-1zM517 365h1v1h-1zM253 169h1v1h-1zM375 368h1v1h-1zM221 304h1v1h-1zM465 356h1v1h-1zM56 276h1v1h-1zM62 175h1v1h-1zM453 257h1v1h-1zM351 267h1v1h-1zM219 202h1v1h-1zM228 370h1v1h-1zM358 223h1v1h-1zM97 218h1v1h-1zM398 263h1v1h-1zM379 360h1v1h-1zM113 327h1v1h-1zM74 364h1v1h-1zM144 218h1v1h-1zM525 242h1v1h-1zM164 382h1v1h-1zM354 383h1v1h-1zM248 278h1v1h-1zM524 280h1v1h-1zM540 196h1v1h-1zM462 189h1v1h-1zM313 146h1v1h-1zM140 397h1v1h-1zM277 361h1v1h-1zM177 239h1v1h-1zM103 293h1v1h-1zM478 282h1v1h-1zM239 393h1v1h-1z" fill="#dcd858" shape-rendering="crispEdges"/><polyline points="53.4,185.9 55.1,183.6 56.2,190.4 57.3,194.9 59,185.9 60.7,178 61.9,189.3 63,185.9 65.3,187 68.1,191 70.9,196.1 73.7,189.3 75.4,182 77.1,201.2 79.9,192.1 82.8,191 85.6,194.4 87.3,216.4 89.5,194.4 91.8,195.5 95.2,183.6 97.5,213.6 100.3,185.9 102,193.2 104.2,202.3 105,201.2 107.3,187 110.1,202.3 112.3,190.4 114,194.4 116.9,204 120.8,185.3 123.1,198.9 125.3,197.2 127.6,202.3 129.3,214.2 132.1,193.8 135,202.3 138.3,204.5 141.2,202.3 142.3,205.1 144.5,193.8 147.9,201.2 151.3,204.5 154.7,200.6 157.5,198.9 159.2,193.8 162.3,208.9 164.5,188.6 165.6,197.6 167.3,205.5 169.6,201.6 173.6,205.5 176.4,210 179.2,219.1 182.6,201.6 184.3,213.4 187.1,229.2 189.4,205.5 191.6,212.3 194.5,200.4 196.7,223.6 199,217.9 202,225.4 204.6,277.1 206.3,215.7 208.6,219.1 211.4,210.6 215,227.3 217.3,230.1 221.2,228.4 224.6,210.3 226.3,210.9 228,228.4 229.1,244.2 230.8,221.6 234.2,213.7 236.5,227.9 239.3,216.6 241.6,217.7 244.4,213.2 247.2,225 251.2,226.7 254,226.2 256.2,234.6 259.1,206.4 261.3,218.2 263.6,226.2 266.4,220.5 268.7,232.4 271.5,229 274,228.2 276.2,216.9 278.5,223.1 281.3,238.3 283.6,221.4 286.4,251.3 288.6,234.4 290.9,234.4 293.7,244.5 300.5,233.8 303.3,251.3 306.2,244 311.2,257 318,230.4 321.4,260.4 324.2,251.3 326.1,260.7 328.4,230.2 330.1,237 333.5,261.2 335.7,246 338,247.7 340.3,242.6 343.1,259 345.3,248.2 347.6,254.5 350.4,242 353.2,268 355.5,247.1 357.8,249.9 361.2,259.5 363.4,262.4 365.7,272.5 368.5,236.9 370.8,278.8 373.6,261.8 375.8,267.5 380.4,254.7 382.3,262.6 385.1,276.2 388.5,268.2 393.6,262 395.3,282.4 396.9,263.7 399.2,256.4 402.6,267.1 405.4,277.3 408.2,268.8 411.1,271.1 415,291.4 417.3,263.2 420.7,272.8 424.6,283.5 428.6,277.9 432.5,296.5 435.4,288.6 438.8,285.8 440,292.6 442.3,279.6 445.1,287 447.7,277.3 449.6,296 451.3,292.6 452.4,303.9 454.7,297.1 455.8,310.7 458.1,297.1 460.9,290.3 464.3,300 467.7,292 470.5,305 473.3,307.3 475.6,311.2 477.3,292.6 479,313.5 481.2,303.9 483.5,307.3 485.2,300.5 487.5,311.8 489.7,301.6 492,306.2 494.2,302.2 495.9,306.3 497.3,332.3 498.4,312 500.1,313.1 501.8,318.7 503.5,314.8 505.2,323.2 507.4,322.1 509.7,315.9 511.9,319.3 514.8,333.4 516.5,316.5 518.2,328.9 519.9,314.8 521.6,328.9 523.2,317 524.9,321 527.2,321 529.5,327.8 531.2,323.8 532.9,328.9 534.5,343.6 536.8,330 539.6,333.4 542.5,331.2 544.7,340.2 547.5,331.2" fill="none" stroke="#44b8ee" stroke-width="1.15" stroke-linejoin="miter"/><g font-family="Liberation Sans" font-size="14" fill="#111"><text transform="translate(47.8 149.9) scale(0.88 1)" text-anchor="end">80</text><text transform="translate(47.8 190.9) scale(0.88 1)" text-anchor="end">70</text><text transform="translate(47.8 231.9) scale(0.88 1)" text-anchor="end">60</text><text transform="translate(47.8 272.9) scale(0.88 1)" text-anchor="end">50</text><text transform="translate(47.8 313.9) scale(0.88 1)" text-anchor="end">40</text><text transform="translate(47.8 354.9) scale(0.88 1)" text-anchor="end">30</text><text transform="translate(47.8 395.9) scale(0.88 1)" text-anchor="end">20</text><text transform="translate(47.8 436.9) scale(0.88 1)" text-anchor="end">10</text><text transform="translate(552.0 149.9) scale(0.88 1)" text-anchor="start">40</text><text transform="translate(552.0 190.9) scale(0.88 1)" text-anchor="start">35</text><text transform="translate(552.0 231.9) scale(0.88 1)" text-anchor="start">30</text><text transform="translate(552.0 272.9) scale(0.88 1)" text-anchor="start">25</text><text transform="translate(552.0 313.9) scale(0.88 1)" text-anchor="start">20</text><text transform="translate(552.0 354.9) scale(0.88 1)" text-anchor="start">15</text><text transform="translate(552.0 395.9) scale(0.88 1)" text-anchor="start">10</text><text transform="translate(552.0 436.9) scale(0.88 1)" text-anchor="start">5</text><text transform="translate(53.1 486.2) scale(0.88 1)" text-anchor="middle">0</text><text transform="translate(102.1 486.2) scale(0.88 1)" text-anchor="middle">10</text><text transform="translate(151.1 486.2) scale(0.88 1)" text-anchor="middle">20</text><text transform="translate(201.1 486.2) scale(0.88 1)" text-anchor="middle">30</text><text transform="translate(250.1 486.2) scale(0.88 1)" text-anchor="middle">40</text><text transform="translate(300.1 486.2) scale(0.88 1)" text-anchor="middle">50</text><text transform="translate(349.1 486.2) scale(0.88 1)" text-anchor="middle">60</text><text transform="translate(398.1 486.2) scale(0.88 1)" text-anchor="middle">70</text><text transform="translate(448.1 486.2) scale(0.88 1)" text-anchor="middle">80</text><text transform="translate(497.1 486.2) scale(0.88 1)" text-anchor="middle">90</text><text transform="translate(547.1 486.2) scale(0.88 1)" text-anchor="middle">100%</text></g><g font-family="Liberation Sans" font-size="13.3" fill="#111"><text x="53" y="142">MB/sec</text><text x="546.5" y="142" text-anchor="end">ms</text></g></svg>

<!-- right panel -->
<div class="a" style="left:608px;top:122px;width:98px;height:24px;border:1px solid #707070;border-radius:3px;background:linear-gradient(#f2f2f2,#ebebeb 50%,#dddddd 51%,#cfcfcf)"></div>
<div class="t ui" style="left:640px;top:128px;letter-spacing:0.95px">Start</div>
<div class="a" style="left:584px;top:171px;width:147px;height:146px;border:1px solid #d5dfe5;border-radius:3px"></div>
<div class="a" style="left:590px;top:164px;width:92px;height:14px;background:#fff"></div>
<div class="t ui" style="left:592px;top:164px;letter-spacing:0.63px">Transfer Rate</div>
<div class="t ui" style="left:593px;top:185px;letter-spacing:0.35px">Minimum</div>
<div class="lcd" style="top:205px;color:#3cb4ee">31.2 MB/sec</div>
<div class="t ui" style="left:593px;top:226px;letter-spacing:0.35px">Maximum</div>
<div class="lcd" style="top:246px;color:#3cb4ee">71.9 MB/sec</div>
<div class="t ui" style="left:593px;top:268px;letter-spacing:0.4px">Average:</div>
<div class="lcd" style="top:287px;color:#3cb4ee">55.0 MB/sec</div>
<div class="t ui" style="left:593px;top:330px;letter-spacing:0.75px">Access Time:</div>
<div class="lcd" style="top:349px;color:#f0f040">14.8 ms</div>
<div class="t ui" style="left:593px;top:386px;letter-spacing:0.4px">Burst</div>
<div class="lcd" style="top:405px;color:#fff">123.5 MB/sec</div>
<div class="t ui" style="left:593px;top:437px;letter-spacing:0.5px">CPU Usage</div>
<div class="lcd" style="top:457px;height:18px;line-height:18px;color:#fff">6.5%</div>
</body></html>
